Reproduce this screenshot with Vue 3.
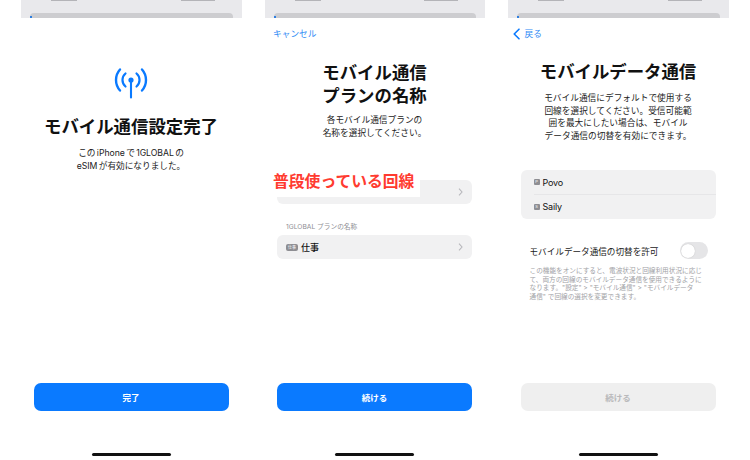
<script setup>
const noteLines = [
  'この機能をオンにすると、電波状況と回線利用状況に応じ',
  'て、両方の回線のモバイルデータ通信を使用できるように',
  'なります。"設定" > "モバイル通信" > "モバイルデータ',
  '通信" で回線の選択を変更できます。',
]
</script>

<template>
  <main class="page">
    <section class="phone">
      <div class="backdrop"><div class="backcard"><i class="dot"></i></div></div>
      <div class="sheet">
        <div class="nav"></div>
        <svg class="antenna" viewBox="0 0 36 33" width="36" height="33" fill="none" stroke="#0a7aff" stroke-linecap="round">
          <circle cx="18" cy="13" r="2.600" fill="#0a7aff" stroke="none" />
          <path d="M18 13v17.500" stroke-width="2.100" />
          <path d="M12.500 6.500A8.500 8.500 0 0 0 12.500 19.500M23.500 6.500A8.500 8.500 0 0 1 23.500 19.500" stroke-width="2.200" />
          <path d="M7 2.500A15.800 15.800 0 0 0 7 23.500M29 2.500A15.800 15.800 0 0 1 29 23.500" stroke-width="2.400" />
        </svg>
        <h1 class="title done-title">モバイル通信設定完了</h1>
        <p class="desc done-desc">この iPhone で 1GLOBAL の<br />eSIM が有効になりました。</p>
        <button class="cta">完了</button>
        <div class="home"></div>
      </div>
    </section>

    <section class="phone">
      <div class="backdrop"><div class="backcard"><i class="dot"></i></div></div>
      <div class="sheet">
        <div class="nav"><span class="link">キャンセル</span></div>
        <h1 class="title plan-title">モバイル通信<br />プランの名称</h1>
        <p class="desc plan-desc">各モバイル通信プランの<br />名称を選択してください。</p>
        <div class="row first-row">
          <span class="callout">普段使っている回線</span>
          <svg class="chev" viewBox="0 0 5 8" width="5" height="8"><path d="M1 .7l3 3.300-3 3.300" fill="none" stroke="#b8b8bc" stroke-width="1.100" /></svg>
        </div>
        <div class="label">1GLOBAL プランの名称</div>
        <div class="row">
          <span class="chip">仕事</span><span class="rowtext">仕事</span>
          <svg class="chev" viewBox="0 0 5 8" width="5" height="8"><path d="M1 .7l3 3.300-3 3.300" fill="none" stroke="#b8b8bc" stroke-width="1.100" /></svg>
        </div>
        <button class="cta">続ける</button>
        <div class="home"></div>
      </div>
    </section>

    <section class="phone">
      <div class="backdrop"><div class="backcard"><i class="dot"></i></div></div>
      <div class="sheet">
        <div class="nav">
          <svg class="back" viewBox="0 0 8 12" width="8" height="12"><path d="M6 1.200L1.200 6 6 10.800" fill="none" stroke="#0a7aff" stroke-width="1.600" stroke-linecap="round" stroke-linejoin="round" /></svg>
          <span class="link">戻る</span>
        </div>
        <h1 class="title data-title">モバイルデータ通信</h1>
        <p class="desc data-desc">モバイル通信にデフォルトで使用する<br />回線を選択してください。受信可能範<br />囲を最大にしたい場合は、モバイル<br />データ通信の切替を有効にできます。</p>
        <div class="group">
          <div class="line"><span class="mini">P</span>Povo</div>
          <div class="line"><span class="mini">S</span>Saily</div>
        </div>
        <div class="switch-row">
          <span>モバイルデータ通信の切替を許可</span>
          <span class="switch"><span class="knob"></span></span>
        </div>
        <p class="note"><span v-for="l in noteLines" :key="l">{{ l }}</span></p>
        <button class="cta off">続ける</button>
        <div class="home"></div>
      </div>
    </section>
  </main>
</template>

<style scoped>
.page {
  width: 750px;
  height: 460px;
  background: #fff;
  display: flex;
  padding-left: 21px;
  gap: 23px;
  box-sizing: border-box;
  overflow: hidden;
  font-family: Inter, "Noto Sans CJK JP", sans-serif;
  color: #111;
}
.phone {
  width: 220.500px;
  display: flex;
  flex-direction: column;
}
.backdrop {
  height: 18px;
  background: #e9e9ec;
  padding: 13px 9px 0;
  box-sizing: border-box;
  position: relative;
}
.backdrop::before,
.backdrop::after {
  content: "";
  position: absolute;
  top: 0;
  height: 1px;
  background: #b4b4b8;
}
.backdrop::before { left: 30px; width: 26px; }
.backdrop::after { right: 27px; width: 34px; }
.backcard {
  height: 5px;
  background: #cdcdd0;
  border-radius: 4px 4px 0 0;
  position: relative;
}
.dot {
  position: absolute;
  left: 0;
  top: 3px;
  width: 2px;
  height: 2px;
  background: #2f7fe0;
}
.sheet {
  height: 442px;
  padding-right: .5px;
  box-sizing: border-box;
  background: #fff;
  border-radius: 8px 8px 0 0;
  display: flex;
  flex-direction: column;
  align-items: center;
  position: relative;
}
.nav {
  align-self: stretch;
  height: 12px;
  margin-top: 10px;
  padding-left: 8.500px;
  display: flex;
  align-items: center;
  gap: 4px;
  font-size: 8.700px;
  color: #2f8bf5;
}
.link { line-height: 12px; }
.back { margin-left: -4px; }
.antenna { margin-top: 27px; }
.title {
  margin: 0;
  text-align: center;
  font-weight: 700;
  letter-spacing: 0;
  color: #111;
  font-size: 17.400px;
  line-height: 22px;
}
.done-title { margin-top: 16px; }
.plan-title { line-height: 22.500px; margin-top: 22px; }
.data-title { margin-top: 21px; }
.desc {
  margin: 0;
  text-align: center;
  font-size: 8.700px;
  line-height: 13px;
  color: #222;
}
.done-desc { margin-top: 9px; line-height: 12.500px; word-spacing: -1px; letter-spacing: -.05px; }
.plan-desc { margin-top: 7px; }
.data-desc { margin-top: 9px; line-height: 12.600px; }
.row {
  width: 195px;
  height: 24px;
  background: #f1f1f2;
  border-radius: 6px;
  display: flex;
  align-items: center;
  padding: 0 9px 0 9px;
  box-sizing: border-box;
  position: relative;
  font-size: 9px;
}
.first-row { margin-top: 40px; }
.callout {
  position: absolute;
  left: -8px;
  top: -9px;
  width: 151px;
  height: 26px;
  box-sizing: border-box;
  padding-left: 4px;
  background: #fff;
  color: #ff3b30;
  font-size: 15.800px;
  font-weight: 700;
  line-height: 22px;
  white-space: nowrap;
}
.label {
  width: 195px;
  box-sizing: border-box;
  padding-left: 9px;
  margin-top: 19px;
  margin-bottom: 3px;
  font-size: 6.700px;
  line-height: 9px;
  color: #8e8e93;
}
.chip {
  width: 12px;
  height: 7px;
  border-radius: 2px;
  background: #8e8e93;
  color: #fff;
  font-size: 4px;
  line-height: 7px;
  text-align: center;
  margin-right: 3px;
}
.rowtext { font-weight: 500; }
.chev { margin-left: auto; }
.group {
  width: 195px;
  margin-top: 27.500px;
  background: #f1f1f2;
  border-radius: 6px;
  font-size: 9px;
  letter-spacing: -.2px;
}
.line {
  height: 24.500px;
  display: flex;
  align-items: center;
  padding-left: 13px;
  position: relative;
}
.line + .line::before {
  content: "";
  position: absolute;
  left: 13px;
  right: 0;
  top: 0;
  height: 1px;
  background: #e6e6e8;
}
.mini {
  width: 6px;
  height: 6px;
  border-radius: 1px;
  background: #8e8e93;
  color: #fff;
  font-size: 4px;
  line-height: 6px;
  text-align: center;
  margin-right: 3px;
}
.switch-row {
  width: 195px;
  height: 20px;
  margin-top: 22px;
  padding: 0 8px 0 9px;
  box-sizing: border-box;
  display: flex;
  align-items: center;
  justify-content: space-between;
  font-size: 8.600px;
  color: #222;
}
.switch {
  width: 28px;
  height: 17px;
  background: #e5e5e7;
  border-radius: 9px;
  padding: 1.500px;
  box-sizing: border-box;
}
.knob {
  display: block;
  width: 14px;
  height: 14px;
  border-radius: 50%;
  background: #fff;
  box-shadow: 0 0 1px rgba(0,0,0,.25);
}
.note {
  width: 195px;
  box-sizing: border-box;
  margin: 6px 0 0;
  padding: 0 0 0 9px;
  font-size: 6.650px;
  line-height: 8.800px;
  color: #a2a2a6;
}
.note span { display: block; white-space: nowrap; }
.cta {
  position: absolute;
  left: 12.500px;
  top: 365px;
  width: 195px;
  height: 28px;
  border: 0;
  border-radius: 7px;
  background: #0a7aff;
  color: #fff;
  font-family: inherit;
  font-size: 8.500px;
  font-weight: 700;
  padding: 0;
}
.cta.off { background: #efefef; color: #b9b9bb; }
.home {
  position: absolute;
  left: 70.500px;
  top: 435px;
  width: 79px;
  height: 3px;
  background: #111;
  border-radius: 2px;
}
</style>
